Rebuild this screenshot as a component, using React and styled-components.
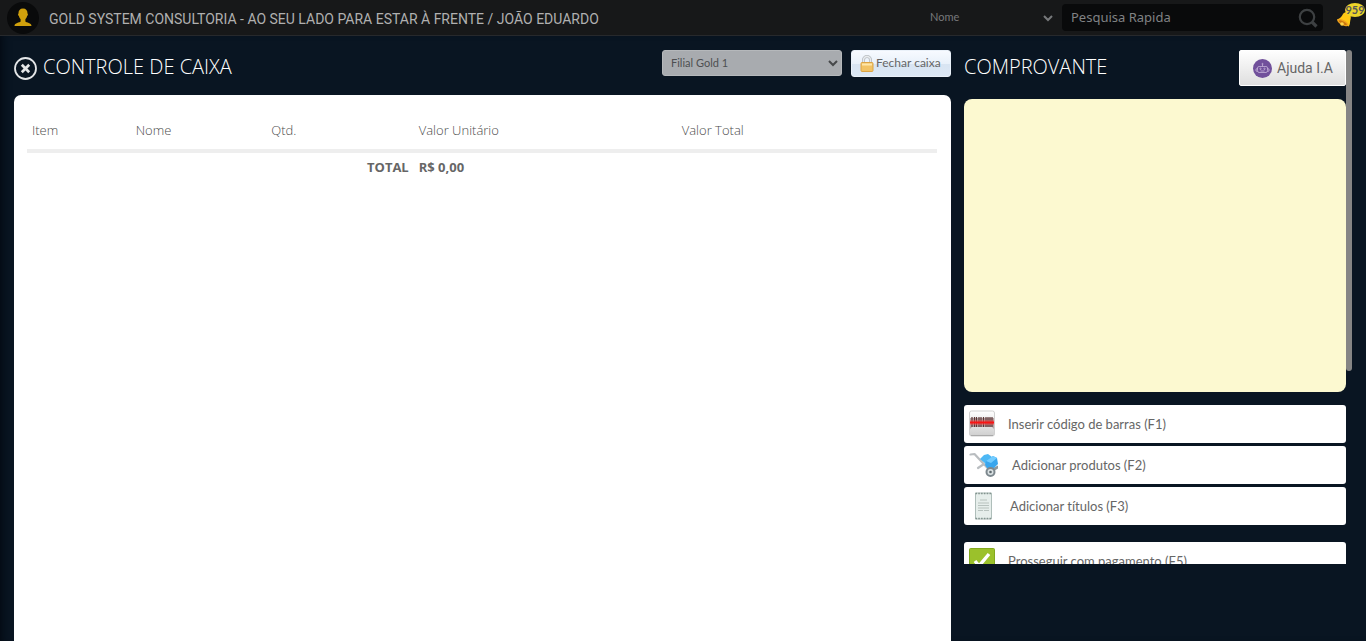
import React from "react";
import styled, { createGlobalStyle } from "styled-components";

const Global = createGlobalStyle`
  * { box-sizing: border-box; }
  body {
    margin: 0;
    background: #091522;
    color: #666;
    font-family: Lato, "Liberation Sans", sans-serif;
    font-size: 13px;
    font-variant-ligatures: none;
  }
  button, input, select { font-family: inherit; color: inherit; margin: 0; font-variant-ligatures: none; }
`;

const Page = styled.div`
  height: 100vh;
  display: flex;
  flex-direction: column;
  overflow: hidden;
`;

const TopBar = styled.header`
  flex: none;
  height: 36px;
  display: flex;
  align-items: center;
  padding-left: 7px;
  background: #171819;
  border-bottom: 1px solid #27292c;
`;

const Avatar = styled.span`
  width: 32px;
  height: 32px;
  border-radius: 50%;
  background: #090a0b;
  display: grid;
  place-items: center;
`;

const Company = styled.h1`
  flex: 1;
  margin: 2px 0 0 10px;
  color: #b0b0b0;
  font: 400 14px/20px Roboto, sans-serif;
  white-space: nowrap;
`;

const SelectWrap = styled.span`
  display: grid;
  align-items: center;
  width: ${(p) => p.$width}px;
  height: 26px;
  > * { grid-area: 1 / 1; }
  svg { justify-self: end; margin-right: 4px; pointer-events: none; }
`;

const Select = styled.select`
  appearance: none;
  width: 100%;
  height: 26px;
  padding: 0 20px 2px 8px;
  border: 1px solid ${(p) => (p.$filled ? "#b5b8bb" : "transparent")};
  border-radius: 3px;
  background: ${(p) => (p.$filled ? "#a8abaf" : "transparent")};
  color: ${(p) => (p.$filled ? "#4d4f51" : "#77797b")};
  font-size: 11px;
`;

const Search = styled.form`
  display: flex;
  align-items: center;
  width: 261px;
  height: 27px;
  margin: 0 13px 0 5px;
  padding-right: 5px;
  border-radius: 4px;
  background: #090a0b;
`;

const SearchInput = styled.input`
  flex: 1;
  min-width: 0;
  padding: 0 0 2px 9px;
  border: 0;
  background: transparent;
  font: 400 13px "Noto Sans", sans-serif;
  &::placeholder { color: #808284; opacity: 1; }
`;

const PlainButton = styled.button`
  display: grid;
  place-items: center;
  padding: 0;
  border: 0;
  background: none;
`;

const Bell = styled(PlainButton)`
  position: relative;
  width: 30px;
  height: 28px;
  justify-items: start;
  align-items: start;
`;

const Badge = styled.span`
  position: absolute;
  top: -1px;
  right: 1px;
  width: 20px;
  height: 14px;
  border-radius: 50%;
  background: #edd42a;
  color: #55565a;
  font: 700 11px/14px Lato, sans-serif;
  text-align: center;
`;

const Main = styled.main`
  flex: 1;
  min-height: 0;
  display: flex;
  gap: 13px;
  padding: 14px 14px 0;
  box-shadow: inset 8px 0 10px -6px #030911;
`;

const Cashier = styled.section`
  flex: 1;
  min-width: 0;
  display: flex;
  flex-direction: column;
`;

const Receipt = styled.section`
  width: 388px;
  height: calc(100vh - 127px);
  display: flex;
  align-items: flex-start;
  overflow: hidden;
`;

const ReceiptBody = styled.div`
  flex: 1;
`;

const ScrollThumb = styled.div`
  width: 6px;
  height: 321px;
  border-radius: 3px;
  background: #858585;
`;

const Heading = styled.div`
  display: flex;
  align-items: flex-start;
  height: ${(p) => p.$height}px;
`;

const Title = styled.h2`
  flex: 1;
  margin: 2px 0 0;
  color: #fff;
  font: 300 20px/30px "Open Sans", sans-serif;
`;

const CloseButton = styled(PlainButton)`
  width: 23px;
  height: 23px;
  margin: 7px 6px 0 0;
`;

const CloseCash = styled.button`
  display: flex;
  align-items: center;
  gap: 2px;
  height: 27px;
  width: 100px;
  margin-left: 9px;
  padding: 0 0 0 8px;
  border: 1px solid #eaf1f9;
  border-radius: 3px;
  background: linear-gradient(#f7faff 0, #e9f1fa 50%, #d8e4f2 51%, #dce8f5 100%);
  font-size: 12px;
  line-height: 16px;
  white-space: nowrap;
  span { margin-bottom: 2px; }
`;

const HelpButton = styled.button`
  display: flex;
  align-items: center;
  gap: 5px;
  width: 107px;
  height: 36px;
  padding: 0 0 0 13px;
  border: 1px solid #fff;
  border-radius: 2px;
  background: linear-gradient(#fefefe, #dfdfdf);
  color: #666;
  font: 400 14px/20px Roboto, sans-serif;
  white-space: nowrap;
`;

const Sheet = styled.div`
  flex: 1;
  padding: 16px 14px 0 13px;
  border-radius: 7px 7px 0 0;
  background: #fff;
`;

const Items = styled.table`
  width: 100%;
  table-layout: fixed;
  border-collapse: collapse;
  th {
    height: 40px;
    padding: 0 5px;
    border-bottom: 4px solid #eee;
    color: #4c4c4c;
    text-align: left;
    font: 300 13px/20px "Open Sans", sans-serif;
  }
  td {
    padding: 4px 5px;
    font: 700 13px/20px "Open Sans", sans-serif;
  }
`;

const TotalLabel = styled.td`
  text-align: right;
`;

const Column = styled.col`
  width: ${(p) => p.$share}%;
`;

const Paper = styled.div`
  height: 293px;
  margin-bottom: 13px;
  border-radius: 8px;
  background: #fcf9d0;
`;

const Action = styled.button`
  display: flex;
  align-items: center;
  width: 100%;
  height: 38px;
  margin-bottom: ${(p) => (p.$last ? 17 : 3)}px;
  padding: 0 5px 1px;
  border: 0;
  border-radius: 3px;
  background: #fff;
  font-size: 13px;
  line-height: 20px;
  text-align: left;
  svg { flex: none; margin-right: 13px; }
`;

const Chevron = ({ color }) => (
  <svg width="10" height="8" viewBox="0 0 10 8" fill="none" stroke={color} strokeWidth="2">
    <path d="M1 2l4 4 4-4" />
  </svg>
);

const BarcodeIcon = () => (
  <svg width="26" height="27" viewBox="0 0 26 27">
    <defs>
      <linearGradient id="bar" x2="0" y2="1">
        <stop stopColor="#fff" />
        <stop offset="1" stopColor="#cfcfcf" />
      </linearGradient>
    </defs>
    <rect x=".5" y="1" width="25" height="25" rx="2" fill="url(#bar)" stroke="#d0d0d0" />
    <path d="M1 8h24v11l-2-2H3l-2 2z" fill="#b6a6a6" />
    <path d="M3 7v10M5.500 7v10M7.500 7v10M10 7v10M12 7v10M14.500 7v10M17 7v10M19 7v10M21 7v10M23 7v10" stroke="#5c3434" strokeWidth="1.200" />
    <path d="M1 12.500h24" stroke="#f55" strokeWidth="5" opacity=".45" />
    <path d="M1 12.500h24" stroke="#fb1414" strokeWidth="2" />
    <path d="M2 25.500h22" stroke="#aaa" />
  </svg>
);

const TrolleyIcon = () => (
  <svg width="30" height="27" viewBox="0 0 30 27">
    <path d="M1.500 3.500l4-.5 13 14M9 17l6-4" fill="none" stroke="#b9bdc0" strokeWidth="2.200" strokeLinecap="round" strokeLinejoin="round" />
    <path d="M22 18l7-3.500v3l-4 2.500z" fill="#8f989d" />
    <path d="M11 8l4-4 4-1 4 3-5 8z" fill="#4db8f5" />
    <path d="M17 10l7-5 4 2 1 6-5 5-6-1-2-3z" fill="#39a6ee" />
    <path d="M17 10l7-5 4 2-6 5z" fill="#73ccff" />
    <circle cx="21.500" cy="21" r="4" fill="#d9e0e2" stroke="#7d888e" strokeWidth="2" />
    <circle cx="21.500" cy="21" r="1.300" fill="#5e696f" />
  </svg>
);

const ReceiptIcon = () => (
  <svg width="28" height="28" viewBox="0 0 28 28">
    <path d="M6.500 1h16v26h-16z" fill="#e6eeeb" stroke="#afbeba" />
    <path d="M6.500 1.500h16M6.500 26.500h16" stroke="#82938e" strokeWidth="1.600" strokeDasharray="1.500 1.300" />
    <path d="M11 8h7M9 11h11M9 13.500h11M9 16h11M9 18.500h5M15 18.500h5" stroke="#b7c2be" strokeWidth="1.200" />
  </svg>
);

const CheckIcon = () => (
  <svg width="26" height="26" viewBox="0 0 26 26">
    <rect x=".5" y=".5" width="25" height="25" rx="1" fill="#9bc12b" stroke="#83a91e" />
    <path d="M6 13l4 5L20 6" fill="none" stroke="#fff" strokeWidth="3.400" />
  </svg>
);

const LockIcon = () => (
  <svg width="14" height="17" viewBox="0 0 14 17">
    <path d="M3.500 8V5a3.500 3.500 0 017 0v3" fill="none" stroke="#b9bec3" strokeWidth="3" />
    <path d="M3.500 8V5a3.500 3.500 0 017 0v3" fill="none" stroke="#e9ecee" strokeWidth="1.300" />
    <rect x="1" y="7.500" width="12" height="9" rx="1" fill="#f2c365" stroke="#dca445" />
    <path d="M2 9.500h10" stroke="#ffe6aa" strokeWidth="2" />
  </svg>
);

const RobotIcon = () => (
  <svg width="19" height="19" viewBox="0 0 19 19" fill="none" stroke="#c4b1d8" strokeWidth=".8">
    <circle cx="9.500" cy="9.500" r="9.500" fill="#71509b" stroke="none" />
    <path d="M6 7.500h7q1.500 0 1.500 1.500v2.500q0 2-1.500 2H6q-1.500 0-1.500-2V9q0-1.500 1.500-1.500zM9.500 7.500V5.500M4.500 9.500L3 10v2l1.500.5M14.500 9.500L16 10v2l-1.500.5M7.500 12h4" />
    <circle cx="7.500" cy="9.800" r=".7" />
    <circle cx="11.500" cy="9.800" r=".7" />
    <circle cx="9.500" cy="5" r=".6" />
  </svg>
);

const actions = [
  { label: "Inserir código de barras (F1)", Icon: BarcodeIcon },
  { label: "Adicionar produtos (F2)", Icon: TrolleyIcon },
  { label: "Adicionar títulos (F3)", Icon: ReceiptIcon, last: true },
  { label: "Prosseguir com pagamento (F5)", Icon: CheckIcon },
];

export default function App() {
  return (
    <Page>
      <Global />
      <TopBar>
        <Avatar>
          <svg width="18" height="19" viewBox="0 0 18 19" fill="#d0a00c">
            <path d="M9 .5c3 0 4.700 2 4.500 5 .7.300.5 2-.4 2.600-.4 1.700-1 2.400-1.700 3.200v2.200c1 1.300 6.100 1 6.100 4.500H.5c0-3.500 5.100-3.200 6.100-4.500v-2.200C5.900 10.500 5.300 9.800 4.900 8.100c-.9-.6-1.100-2.300-.4-2.600C4.300 2.500 6 .5 9 .5z" />
          </svg>
        </Avatar>
        <Company>GOLD SYSTEM CONSULTORIA - AO SEU LADO PARA ESTAR À FRENTE / JOÃO EDUARDO</Company>
        <SelectWrap $width={136}>
          <Select aria-label="Campo da pesquisa">
            <option>Nome</option>
          </Select>
          <Chevron color="#77797b" />
        </SelectWrap>
        <Search>
          <SearchInput aria-label="Pesquisa Rapida" placeholder="Pesquisa Rapida" />
          <PlainButton type="button" aria-label="Pesquisar">
            <svg width="20" height="20" viewBox="0 0 20 20" fill="none" stroke="#3d4042">
              <circle cx="9" cy="9" r="7.200" strokeWidth="2.200" />
              <path d="M14 14l4.500 4.500" strokeWidth="3.200" />
            </svg>
          </PlainButton>
        </Search>
        <Bell aria-label="Notificações">
          <svg width="18" height="24" viewBox="0 0 18 24">
            <path d="M1 15.500c3-1 4.500-2.500 6-5.500 1.500-2.500 6-2.500 7.500 1 1 3-.5 5-.5 7.500 0 1.500-.6 3-1.500 4z" fill="#ffc814" />
            <ellipse cx="6.800" cy="18.500" rx="6.300" ry="2.600" transform="rotate(28 6.800 18.500)" fill="#f2a51c" />
            <ellipse cx="6.800" cy="18.700" rx="4.500" ry="1.300" transform="rotate(28 6.800 18.700)" fill="#c9760f" />
            <circle cx="6" cy="20" r="1.800" fill="#ffd44a" />
          </svg>
          <Badge>959</Badge>
        </Bell>
      </TopBar>
      <Main>
        <Cashier>
          <Heading $height={45}>
            <CloseButton aria-label="Fechar">
              <svg width="23" height="23" viewBox="0 0 23 23" fill="none" stroke="#e4e6e8">
                <circle cx="11.500" cy="11.500" r="10.500" strokeWidth="1.800" />
                <path d="M7.800 7.800l7.400 7.400M15.200 7.800l-7.400 7.400" strokeWidth="2.700" />
              </svg>
            </CloseButton>
            <Title>CONTROLE DE CAIXA</Title>
            <SelectWrap $width={180}>
              <Select $filled aria-label="Filial">
                <option>Filial Gold 1</option>
              </Select>
              <Chevron color="#46484a" />
            </SelectWrap>
            <CloseCash>
              <LockIcon />
              <span>Fechar caixa</span>
            </CloseCash>
          </Heading>
          <Sheet>
            <Items>
              <colgroup>
                <Column $share={11.4} />
                <Column $share={14.9} />
                <Column $share={16.2} />
                <Column $share={28.9} />
                <Column $share={28.6} />
              </colgroup>
              <thead>
                <tr>
                  <th>Item</th>
                  <th>Nome</th>
                  <th>Qtd.</th>
                  <th>Valor Unitário</th>
                  <th>Valor Total</th>
                </tr>
              </thead>
              <tbody>
                <tr>
                  <TotalLabel colSpan={3}>TOTAL</TotalLabel>
                  <td colSpan={2}>R$ 0,00</td>
                </tr>
              </tbody>
            </Items>
          </Sheet>
        </Cashier>
        <Receipt>
          <ReceiptBody>
            <Heading $height={49}>
              <Title>COMPROVANTE</Title>
              <HelpButton>
                <RobotIcon />
                Ajuda I.A
              </HelpButton>
            </Heading>
            <Paper />
            {actions.map(({ label, Icon, last }) => (
              <Action key={label} $last={last}>
                <Icon />
                {label}
              </Action>
            ))}
          </ReceiptBody>
          <ScrollThumb />
        </Receipt>
      </Main>
    </Page>
  );
}
